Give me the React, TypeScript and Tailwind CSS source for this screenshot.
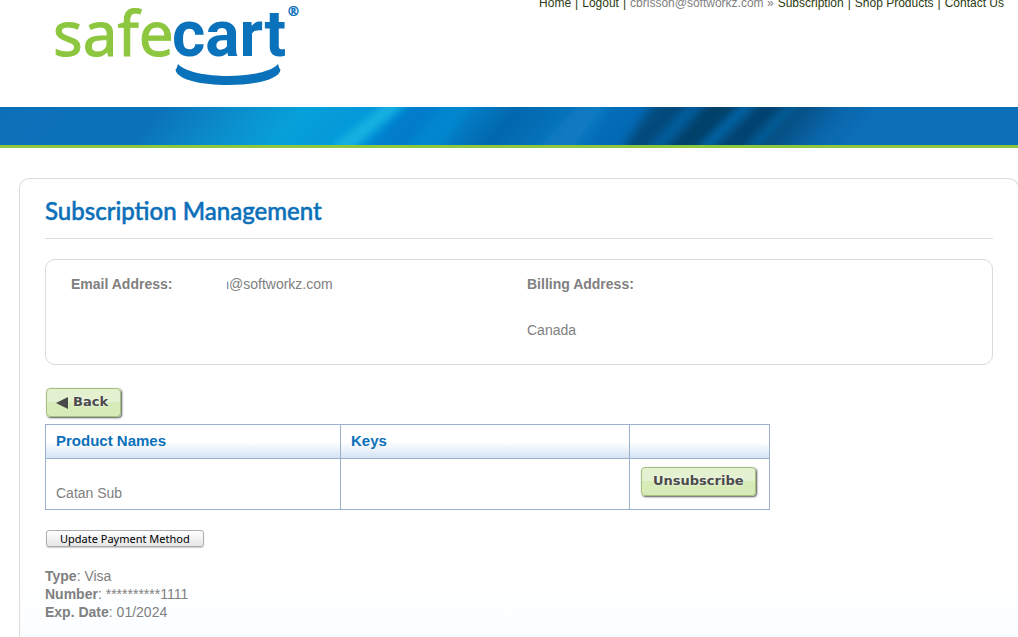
import type { ReactNode } from "react";

const products = [{ name: "Catan Sub", keys: "" }];

const payment = [
	{ label: "Type", value: "Visa" },
	{ label: "Number", value: "**********1111" },
	{ label: "Exp. Date", value: "01/2024" },
];

function Logo() {
	return (
		<svg
			className="ml-[50px] h-[96px] w-[256px] shrink-0"
			viewBox="50 0 256 96"
			role="img"
			aria-label="safecart"
		>
			<text
				x="53"
				y="56"
				fill="#8dc63f"
				stroke="#8dc63f"
				strokeWidth="1"
				fontFamily="'Noto Sans', sans-serif"
				fontSize="62"
			>
				safe
			</text>
			<text
				x="172"
				y="56"
				fill="#0a71bb"
				fontFamily="Roboto, sans-serif"
				fontSize="64"
				fontWeight="700"
			>
				cart
			</text>
			<text
				x="288"
				y="16"
				fill="#0a71bb"
				stroke="#0a71bb"
				strokeWidth="0.5"
				fontFamily="'Noto Sans', sans-serif"
				fontSize="13"
			>
				®
			</text>
			<path
				d="M178 64 C192 80 264 80 278 64 Q279 68 280.500 70 C277 90 179 90 175.500 70 Q177 68 178 64 Z"
				fill="#0a71bb"
			/>
		</svg>
	);
}

function Banner() {
	return (
		<div className="h-[41px] border-b-[3px] border-[#8dc63f] bg-[#0c70b9]">
			<svg
				className="block h-[38px] w-full"
				viewBox="0 0 1018 38"
				preserveAspectRatio="none"
				aria-hidden="true"
			>
				<defs>
					<linearGradient
						id="sky"
						x1="0"
						x2="1018"
						y1="0"
						y2="0"
						gradientUnits="userSpaceOnUse"
						gradientTransform="skewX(-40)"
					>
						<stop offset="0" stopColor="#0c70b9" />
						<stop offset="0.16" stopColor="#0b72b9" />
						<stop offset="0.23" stopColor="#0b8bca" />
						<stop offset="0.3" stopColor="#07a0d9" />
						<stop offset="0.36" stopColor="#0499d9" />
						<stop offset="0.4" stopColor="#0289d5" />
						<stop offset="0.46" stopColor="#027fc8" />
						<stop offset="0.51" stopColor="#0268ad" />
						<stop offset="0.55" stopColor="#0470b7" />
						<stop offset="0.59" stopColor="#0a78c0" />
						<stop offset="0.63" stopColor="#0469b4" />
						<stop offset="0.67" stopColor="#04508a" />
						<stop offset="0.72" stopColor="#04446f" />
						<stop offset="0.78" stopColor="#054b7c" />
						<stop offset="0.83" stopColor="#0a66ab" />
						<stop offset="0.87" stopColor="#0c70b9" />
						<stop offset="1" stopColor="#0c70b9" />
					</linearGradient>
					<filter id="soft" x="-50%" y="-50%" width="200%" height="200%">
						<feGaussianBlur stdDeviation="4" />
					</filter>
				</defs>
				<rect width="1018" height="38" fill="url(#sky)" />
				<g filter="url(#soft)">
					<path d="M388 -6H408L350 44H326Z" fill="#16b2e2" />
					<path d="M412 -6H444L408 44H366Z" fill="#0279c9" opacity="0.7" />
					<path d="M450 -6H474L440 44H404Z" fill="#058dd2" opacity="0.5" />
					<path d="M582 -6H606L570 44H536Z" fill="#107dc3" opacity="0.6" />
					<path d="M612 -6H640L618 44H582Z" fill="#046ab6" opacity="0.6" />
					<path d="M656 -6H690L642 44H622Z" fill="#043f68" opacity="0.6" />
					<path d="M692 -6H706L660 44H646Z" fill="#055f9f" />
					<path d="M712 -6H742L690 44H668Z" fill="#033f68" />
					<path d="M745 -6H759L709 44H695Z" fill="#0566a8" />
					<path d="M764 -6H786L738 44H720Z" fill="#04426f" />
					<path d="M790 -6H804L756 44H742Z" fill="#06609f" opacity="0.8" />
				</g>
			</svg>
		</div>
	);
}

function GreenButton({ children }: { children: ReactNode }) {
	return (
		<button
			type="button"
			className="flex h-[29px] items-center rounded border border-[#a5bf7c] bg-[linear-gradient(#e4f1d1_50%,#d7ebb9_50%)] font-['DejaVu_Sans',sans-serif] text-[13px] font-bold text-[#4a4a4a] shadow-[1px_1px_2px_#555] [text-shadow:0_0_2px_#fff]"
		>
			{children}
		</button>
	);
}

export default function App() {
	return (
		<div className="flex min-h-screen flex-col overflow-hidden bg-white font-['Liberation_Sans',Arial,sans-serif] text-sm text-[#808080]">
			<header className="flex h-[107px] items-start justify-between">
				<Logo />
				<nav className="-mt-[3px] mr-[14px] flex gap-1 text-xs leading-3 whitespace-nowrap text-[#2b3a10]">
					<a href="#home">Home</a>
					<span>|</span>
					<a href="#logout">Logout</a>
					<span>|</span>
					<span className="text-[#808080]">cbrisson@softworkz.com »</span>
					<a href="#subscription">Subscription</a>
					<span>|</span>
					<a href="#shop">Shop Products</a>
					<span>|</span>
					<a href="#contact">Contact Us</a>
				</nav>
			</header>
			<Banner />

			<main className="mt-[30px] -mr-px ml-[19px] flex-1 rounded-t-[10px] border border-b-0 border-[#dcdcdc] bg-[linear-gradient(#fff_400px,#fafdff_460px)] px-[25px] pb-4">
				<h1 className="h-[60px] border-b border-[#dcdcdc] pt-4 font-[Lato,sans-serif] text-[24px] leading-8 font-medium text-[#0c70b9] [-webkit-text-stroke:0.5px_#0c70b9]">
					Subscription Management
				</h1>

				<section className="mt-5 grid grid-cols-[456px_1fr] rounded-[10px] border border-[#dcdcdc] pt-[13px] pb-[22px] pl-[25px] leading-[23px]">
					<div className="flex">
						<strong className="w-[156px]">Email Address:</strong>
						<span className="flex w-[2px] justify-end overflow-hidden">n</span>
						<span>@softworkz.com</span>
					</div>
					<div>
						<strong>Billing Address:</strong>
						<p className="mt-[23px]">Canada</p>
					</div>
				</section>

				<div className="mt-[23px] ml-px flex">
					<GreenButton>
						<span className="flex items-center gap-[5px] pr-3 pl-[9px]">
							<svg className="h-3 w-3" viewBox="0 0 12 12" aria-hidden="true">
								<path d="M12 0V12L0 6Z" fill="#4a4a4a" />
							</svg>
							Back
						</span>
					</GreenButton>
				</div>

				<table className="mt-[7px] w-[725px] table-fixed border-collapse text-left">
					<thead>
						<tr className="h-[34px] bg-[linear-gradient(#fff_50%,#d3e2f4)] text-[15px] text-[#0c70b9]">
							<th className="w-[295px] border border-[#9ab0cd] px-[10px] pb-0.5">
								Product Names
							</th>
							<th className="w-[289px] border border-[#9ab0cd] px-[10px] pb-0.5">Keys</th>
							<th className="border border-[#9ab0cd]" aria-label="Actions" />
						</tr>
					</thead>
					<tbody>
						{products.map((product) => (
							<tr key={product.name} className="h-[51px]">
								<td className="border border-[#9ab0cd] px-[10px] pb-1.5 align-bottom">
									{product.name}
								</td>
								<td className="border border-[#9ab0cd] px-[10px]">{product.keys}</td>
								<td className="border border-[#9ab0cd] px-[11px] pt-2 align-top">
									<GreenButton>
										<span className="px-[11px]">Unsubscribe</span>
									</GreenButton>
								</td>
							</tr>
						))}
					</tbody>
				</table>

				<button
					type="button"
					className="mt-5 ml-px block h-[17px] rounded-[3px] border border-[#adadad] bg-linear-to-b from-white to-[#e6e6e6] px-[13px] font-['Noto_Sans',sans-serif] text-[11px] leading-[15px] text-black shadow-[0_1px_1px_#ccc]"
				>
					Update Payment Method
				</button>

				<ul className="mt-5 leading-[18px]">
					{payment.map(({ label, value }) => (
						<li key={label}>
							<strong>{label}</strong>: {value}
						</li>
					))}
				</ul>
			</main>
		</div>
	);
}
